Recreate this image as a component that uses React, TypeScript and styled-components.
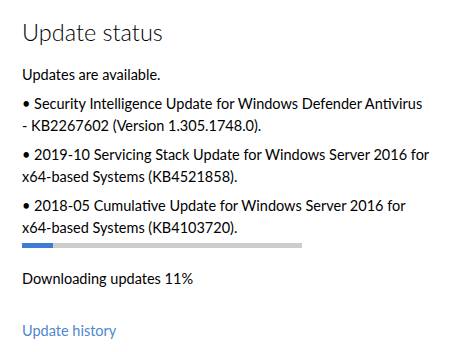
import React from "react";
import styled, { createGlobalStyle } from "styled-components";

const Global = createGlobalStyle`
  html, body { margin: 0; padding: 0; background: #ffffff; }
  body { font-family: "Lato", "Open Sans", sans-serif; color: #000; }
`;

const Page = styled.div`
  width: 451px;
  height: 352px;
  box-sizing: border-box;
  padding: 16px 0 0 22px;
  display: flex;
  flex-direction: column;
  overflow: hidden;
`;

const Title = styled.h1`
  margin: 0;
  font-size: 23.5px;
  font-weight: 300;
  line-height: 32px;
  flex-shrink: 0;
`;

const Status = styled.p`
  margin: 16px 0 0;
  font-size: 14.5px;
  line-height: 22px;
  flex-shrink: 0;
`;

const List = styled.ul`
  list-style: none;
  margin: 7px 0 0;
  padding: 0;
  display: flex;
  flex-direction: column;
  gap: 7px;
  flex-shrink: 0;
`;

const Item = styled.li`
  font-size: 14.5px;
  line-height: 22px;
  width: 432px;
`;

const NoWrap = styled.span`
  white-space: nowrap;
`;

const Bar = styled.div`
  margin-top: 4px;
  width: 280px;
  height: 5px;
  background: #cccccc;
  flex-shrink: 0;
`;

const Fill = styled.div`
  height: 100%;
  background: #3f7ad6;
`;

const Progress = styled.p`
  margin: 20px 0 0;
  font-size: 14.5px;
  line-height: 22px;
  flex-shrink: 0;
`;

const Link = styled.a`
  margin-top: 30px;
  font-size: 14.5px;
  line-height: 22px;
  color: #4e87d1;
  text-decoration: none;
  align-self: flex-start;
  flex-shrink: 0;
`;

export default function App() {
  const pct = 11;
  return (
    <>
      <Global />
      <Page>
        <Title>Update status</Title>
        <Status>Updates are available.</Status>
        <List>
          <Item>
            • Security Intelligence Update for Windows Defender Antivirus{" "}
            <NoWrap>- KB2267602</NoWrap> (Version 1.305.1748.0).
          </Item>
          <Item>
            • 2019-10 Servicing Stack Update for Windows Server 2016 for{" "}
            <NoWrap>x64-based</NoWrap> Systems (KB4521858).
          </Item>
          <Item>
            • 2018-05 Cumulative Update for Windows Server 2016 for{" "}
            <NoWrap>x64-based</NoWrap> Systems (KB4103720).
          </Item>
        </List>
        <Bar>
          <Fill style={{ width: `${pct}%` }} />
        </Bar>
        <Progress>Downloading updates {pct}%</Progress>
        <Link href="#">Update history</Link>
      </Page>
    </>
  );
}
